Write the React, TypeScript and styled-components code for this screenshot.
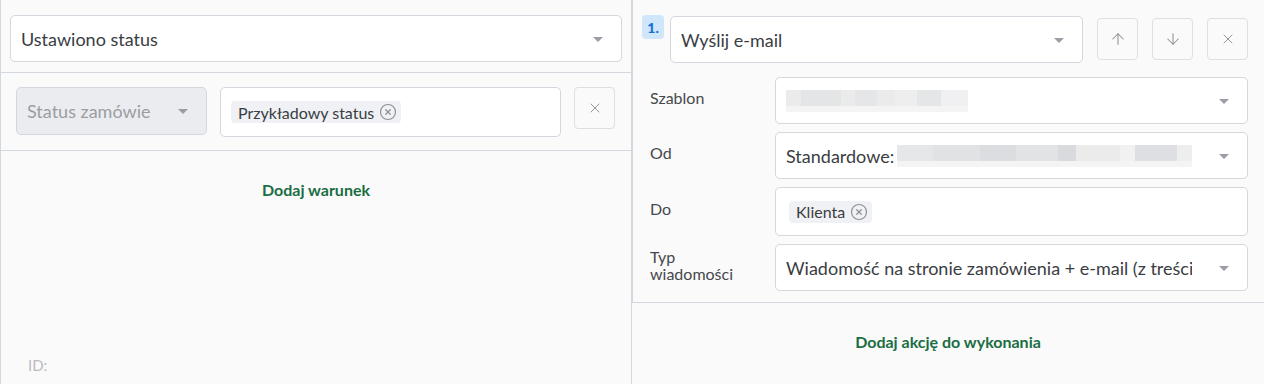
import styled, { createGlobalStyle } from 'styled-components';
import { ArrowUp, ArrowDown, X, CircleX } from 'lucide-react';

const GlobalStyle = createGlobalStyle`
  html, body {
    margin: 0;
    padding: 0;
    background: #fafafa;
    font-family: Lato, "Noto Sans", sans-serif;
    color: #3a3d42;
  }
`;

const Layout = styled.div`
  display: flex;
  width: 1264px;
  height: 384px;
  overflow: hidden;
`;

const ConditionsPanel = styled.div`
  width: 630px;
  flex-shrink: 0;
  border-left: 1px solid #d3d7de;
  border-right: 1px solid #d3d7de;
  display: flex;
  flex-direction: column;
`;

const TriggerSection = styled.div`
  padding: 15px 9px 10px 9px;
  border-bottom: 1px solid #d3d7de;
`;

const ConditionRow = styled.div`
  display: flex;
  align-items: flex-start;
  gap: 13px;
  padding: 14px 16px 13px 15px;
  border-bottom: 1px solid #d3d7de;
`;

const Field = styled.div<{ $width?: number; $height?: number; $disabled?: boolean }>`
  position: relative;
  box-sizing: border-box;
  display: flex;
  align-items: center;
  width: ${p => (p.$width ? `${p.$width}px` : 'auto')};
  flex: ${p => (p.$width ? '0 0 auto' : '1 1 0')};
  min-width: 0;
  height: ${p => p.$height ?? 47}px;
  padding: 0 55px 0 10px;
  background: ${p => (p.$disabled ? '#ebecef' : '#fff')};
  border: 1px solid #d3d7de;
  border-radius: 5px;
  font-size: 18px;
  color: ${p => (p.$disabled ? '#9a9da3' : '#3a3d42')};
  white-space: nowrap;
  overflow: hidden;
`;

const Value = styled.span`
  display: flex;
  align-items: center;
  flex: 1 1 auto;
  min-width: 0;
  overflow: hidden;
  white-space: nowrap;
`;

const Caret = styled.span`
  position: absolute;
  right: 18px;
  top: 50%;
  margin-top: -2px;
  width: 0;
  height: 0;
  border-left: 5px solid transparent;
  border-right: 5px solid transparent;
  border-top: 5px solid #9a9da3;
`;

const Tag = styled.span`
  display: inline-flex;
  align-items: center;
  gap: 5px;
  height: 22px;
  padding: 0 4px 0 7px;
  background: #eff1f4;
  border-radius: 4px;
  font-size: 16px;
  color: #3a3d42;
  svg {
    color: #8d9097;
  }
`;

const IconButton = styled.button`
  box-sizing: border-box;
  flex: 0 0 41px;
  width: 41px;
  height: 42px;
  padding: 0;
  display: flex;
  align-items: center;
  justify-content: center;
  background: #fafafa;
  border: 1px solid #dcdfe4;
  border-radius: 4px;
  color: #8d9097;
`;

const AddLink = styled.div<{ $pad: number }>`
  padding-top: ${p => p.$pad}px;
  text-align: center;
  font-size: 16px;
  font-weight: 700;
  line-height: 20px;
  color: #1b6e44;
`;

const Spacer = styled.div`
  flex: 1;
`;

const IdLabel = styled.div`
  padding: 0 0 10px 27px;
  font-size: 15px;
  color: #b9bcc2;
`;

const ActionsPanel = styled.div`
  flex: 1;
  min-width: 0;
  display: flex;
  flex-direction: column;
`;

const ActionCard = styled.div`
  min-width: 0;
  border-left: 1px solid #d3d7de;
  border-bottom: 1px solid #d3d7de;
  padding: 15px 16px 11px 9px;
  display: flex;
  flex-direction: column;
  gap: 8px;
`;

const ActionHeader = styled.div`
  display: flex;
  align-items: flex-start;
  gap: 14px;
  margin-bottom: 6px;
`;

const Badge = styled.span`
  flex: 0 0 auto;
  width: 22px;
  height: 24px;
  margin-right: -8px;
  display: flex;
  align-items: center;
  justify-content: center;
  background: #cfe6fb;
  border-radius: 4px;
  color: #1a6fd6;
  font-size: 14px;
  font-weight: 900;
`;

const HeaderButtons = styled.div`
  display: flex;
  gap: 14px;
  padding-top: 3px;
`;

const ParamRow = styled.div`
  display: flex;
  align-items: center;
  padding-left: 8px;
`;

const ParamLabel = styled.div`
  flex: 0 0 125px;
  font-size: 16px;
  line-height: 17px;
  padding-bottom: 6px;
  color: #45484d;
`;

const Redacted = styled.span<{ $width: number; $gap: number; $cells: string }>`
  display: inline-block;
  flex-shrink: 0;
  width: ${p => p.$width}px;
  height: 22px;
  margin-left: ${p => p.$gap}px;
  background:
    linear-gradient(#f4f4f5, #f4f4f5) bottom / 100% 6px no-repeat,
    ${p => p.$cells};
  filter: blur(0.4px);
`;

const templateCells =
  'linear-gradient(90deg, #ebebec 0 8%, #e4e5e7 8% 30%, #ebebec 30% 38%, #e5e6e8 38% 50%, #ebebec 50% 60%, #eeeeee 60% 72%, #e5e6e8 72% 85%, #f0f0f2 85% 100%)';

const senderCells =
  'linear-gradient(90deg, #e6e7e9 0 12%, #e1e2e4 12% 28%, #dcdde0 28% 40%, #e2e3e5 40% 54%, #d9dadd 54% 60%, #ebebec 60% 75%, #f1f1f2 75% 80%, #dedfe2 80% 94%, #eeeeef 94% 100%)';

export default function App() {
  return (
    <>
      <GlobalStyle />
      <Layout>
        <ConditionsPanel>
          <TriggerSection>
            <Field>
              <Value>Ustawiono status</Value>
              <Caret />
            </Field>
          </TriggerSection>
          <ConditionRow>
            <Field $width={191} $height={48} $disabled>
              <Value>Status zamówienia</Value>
              <Caret />
            </Field>
            <Field $height={50}>
              <Tag>
                Przykładowy status
                <CircleX size={18} strokeWidth={1.6} />
              </Tag>
            </Field>
            <IconButton>
              <X size={16} strokeWidth={1.4} />
            </IconButton>
          </ConditionRow>
          <AddLink $pad={29}>Dodaj warunek</AddLink>
          <Spacer />
          <IdLabel>ID:</IdLabel>
        </ConditionsPanel>

        <ActionsPanel>
          <ActionCard>
            <ActionHeader>
              <Badge>1.</Badge>
              <Field style={{ marginTop: 1 }}>
                <Value>Wyślij e-mail</Value>
                <Caret />
              </Field>
              <HeaderButtons>
                <IconButton>
                  <ArrowUp size={18} strokeWidth={1.4} />
                </IconButton>
                <IconButton>
                  <ArrowDown size={18} strokeWidth={1.4} />
                </IconButton>
                <IconButton>
                  <X size={16} strokeWidth={1.4} />
                </IconButton>
              </HeaderButtons>
            </ActionHeader>

            <ParamRow>
              <ParamLabel>Szablon</ParamLabel>
              <Field>
                <Value>
                  <Redacted $width={182} $gap={0} $cells={templateCells} />
                </Value>
                <Caret />
              </Field>
            </ParamRow>
            <ParamRow>
              <ParamLabel>Od</ParamLabel>
              <Field>
                <Value>
                  Standardowe:
                  <Redacted $width={298} $gap={3} $cells={senderCells} />
                </Value>
                <Caret />
              </Field>
            </ParamRow>
            <ParamRow>
              <ParamLabel>Do</ParamLabel>
              <Field $height={49} style={{ paddingLeft: 13 }}>
                <Tag>
                  Klienta
                  <CircleX size={18} strokeWidth={1.6} />
                </Tag>
              </Field>
            </ParamRow>
            <ParamRow>
              <ParamLabel>
                Typ
                <br />
                wiadomości
              </ParamLabel>
              <Field>
                <Value>Wiadomość na stronie zamówienia + e-mail (z treścią)</Value>
                <Caret />
              </Field>
            </ParamRow>
          </ActionCard>
          <AddLink $pad={29}>Dodaj akcję do wykonania</AddLink>
        </ActionsPanel>
      </Layout>
    </>
  );
}
